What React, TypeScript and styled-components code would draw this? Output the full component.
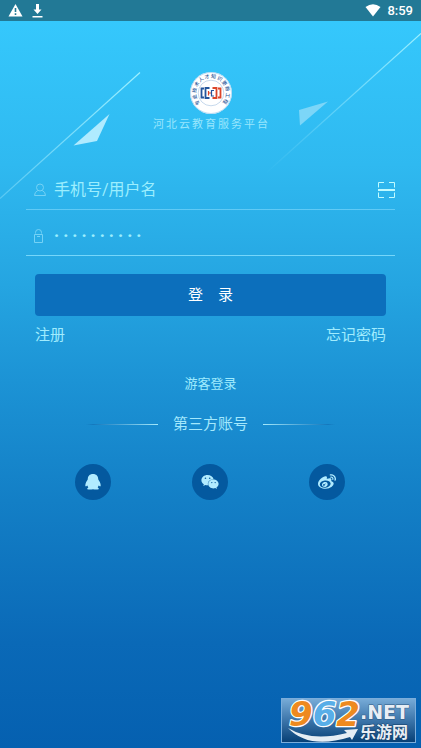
import React from "react";
import styled, { createGlobalStyle } from "styled-components";
import { FaWeibo, FaWeixin } from "react-icons/fa";

const GlobalStyle = createGlobalStyle`
  * { box-sizing: border-box; }
  body {
    margin: 0;
    font-family: Roboto, "Noto Sans CJK SC", sans-serif;
    color: #a4e8fc;
  }
`;

const Page = styled.div`
  position: relative;
  display: flex;
  flex-direction: column;
  min-height: 100vh;
  overflow: hidden;
  background: linear-gradient(180deg, #36cafe 0%, #2fb9f0 22%, #25a5e1 38%, #1c93d5 51%, #137fc6 67%, #0a69b7 86%, #0560b0 100%);
`;

const StatusBar = styled.header`
  display: flex;
  align-items: center;
  justify-content: space-between;
  height: 21px;
  padding: 0 8px;
  background: #227996;
  color: #fff;
  font: 500 13px/21px Roboto, sans-serif;
`;

const StatusGroup = styled.div<{ $gap: number }>`
  display: flex;
  align-items: center;
  gap: ${(p) => p.$gap}px;
  svg { display: block; }
`;

const Backdrop = styled.svg`
  position: absolute;
  top: 21px;
  left: 0;
  width: 100%;
  pointer-events: none;
`;

const Content = styled.main`
  position: relative;
  display: flex;
  flex-direction: column;
  padding: 51px 26px 0;
`;

const Brand = styled.div`
  display: flex;
  flex-direction: column;
  align-items: center;
  gap: 3px;
  svg { display: block; }
`;

const BrandName = styled.h1`
  margin: 0;
  padding-left: 2px;
  font-size: 11px;
  line-height: 16px;
  font-weight: 400;
  letter-spacing: 2px;
  color: #98e6fd;
`;

const Form = styled.form`
  display: flex;
  flex-direction: column;
  margin-top: 37px;
`;

const Field = styled.label<{ $line: string; $height: number; $top: number }>`
  display: flex;
  align-items: center;
  height: ${(p) => p.$height}px;
  padding: ${(p) => p.$top}px 0 0 7px;
  border-bottom: 1px solid ${(p) => p.$line};
`;

const FieldIcon = styled.svg`
  flex: none;
  width: 14px;
  height: 14px;
  margin-right: 7px;
  fill: none;
  stroke: #74d2f6;
  stroke-width: 1;
`;

const Input = styled.input<{ $dots?: boolean }>`
  flex: 1;
  min-width: 0;
  padding: 0;
  border: 0;
  outline: 0;
  background: transparent;
  font: ${(p) => (p.$dots ? 900 : 400)} 16px/24px Roboto, "Noto Sans CJK SC", sans-serif;
  color: #a4f0ff;
  letter-spacing: ${(p) => (p.$dots ? "4px" : "normal")};
  &::placeholder { color: #9ceefe; opacity: 1; }
`;

const PlainButton = styled.button`
  padding: 0;
  border: 0;
  background: transparent;
  color: inherit;
  cursor: pointer;
  svg { display: block; }
`;

const LoginButton = styled(PlainButton)`
  height: 42px;
  margin: 18px 9px 0;
  border-radius: 4px;
  background: #0c6fbc;
  color: #fff;
  font: 400 15px/42px Roboto, "Noto Sans CJK SC", sans-serif;
`;

const Links = styled.nav`
  display: flex;
  justify-content: space-between;
  margin: 8px 9px 0;
`;

const TextLink = styled.a<{ $size: number }>`
  font-size: ${(p) => p.$size}px;
  line-height: 22px;
  color: #a0ecfe;
  text-decoration: none;
`;

const Guest = styled.div`
  display: flex;
  justify-content: center;
  margin-top: 27px;
`;

const Divider = styled.div`
  display: flex;
  align-items: center;
  justify-content: center;
  gap: 15px;
  margin-top: 18px;
`;

const Rule = styled.span<{ $to: string }>`
  width: 72px;
  height: 1px;
  background: linear-gradient(to ${(p) => p.$to}, #0f6fb800, #1378bd 10%, #a4e8fb);
`;

const DividerText = styled.h2`
  margin: 0;
  font-size: 15px;
  line-height: 22px;
  font-weight: 400;
`;

const Socials = styled.div`
  display: flex;
  justify-content: space-between;
  margin: 29px 50px 60px 49px;
`;

const SocialButton = styled(PlainButton)`
  display: grid;
  place-items: center;
  width: 36px;
  height: 36px;
  border-radius: 50%;
  background: #04599f;
  color: #b1ebff;
`;

const Watermark = styled.svg`
  position: absolute;
  right: 5px;
  bottom: 5px;
  width: 135px;
  height: 45px;
  overflow: visible;
`;

function Emblem() {
  return (
    <svg width="42" height="42" viewBox="0 0 42 42" role="img" aria-label="专业技术人才知识更新工程">
      <circle cx="21" cy="21" r="21" fill="#fff" />
      <circle cx="21" cy="21" r="20.5" fill="none" stroke="#8fc4ec" strokeWidth=".6" />
      <circle cx="21" cy="21" r="12.8" fill="none" stroke="#8fb2d8" strokeWidth=".5" />
      <path id="emblem-arc" d="M10.4 31.6A15 15 0 1 1 31.6 31.6" fill="none" />
      <text fill="#1f5598" fontSize="5" fontWeight="500" fontFamily='"Noto Sans CJK SC", sans-serif' letterSpacing=".8">
        <textPath href="#emblem-arc">专业技术人才知识更新工程</textPath>
      </text>
      <g fill="none">
        <path d="M19.500 16H15.500V26H19.500" stroke="#24559b" strokeWidth="1.800" />
        <path d="M14 16.500H11.500V25.500H14" stroke="#24559b" strokeWidth="1.800" />
        <path d="M22.500 16H26.500V26H22.500" stroke="#dc4529" strokeWidth="1.800" />
        <path d="M28 16.500H30.500V25.500H28" stroke="#dc4529" strokeWidth="1.800" />
        <path d="M18.500 19v4.500M18.500 21h3" stroke="#dc4529" strokeWidth="1.200" />
        <path d="M24 18.500H21.500V24H24" stroke="#24559b" strokeWidth="1.200" />
      </g>
    </svg>
  );
}

function BackdropShapes() {
  return (
    <Backdrop viewBox="0 0 421 180" aria-hidden="true">
      <defs>
        <linearGradient id="ray-left" x1="0" y1="1" x2="1" y2="0">
          <stop offset="0" stopColor="#8fe2fc" stopOpacity=".45" />
          <stop offset="1" stopColor="#9df0ff" />
        </linearGradient>
        <linearGradient id="ray-right" x1="0" y1="1" x2="1" y2="0">
          <stop offset="0" stopColor="#8fe2fc" stopOpacity="0" />
          <stop offset="1" stopColor="#9df0ff" />
        </linearGradient>
      </defs>
      <path d="M0 177.500L140 51.500" stroke="url(#ray-left)" strokeWidth="1.200" />
      <path d="M265 153L421 12.500" stroke="url(#ray-right)" strokeWidth="1.200" />
      <path d="M109.500 93L73.500 124.500L97 120Z" fill="#b0ebff" />
      <path d="M328 80.500L299 89L300 104.500Z" fill="#7cd6f8" />
    </Backdrop>
  );
}

function SiteMark() {
  return (
    <Watermark viewBox="0 0 135 45" role="img" aria-label="962.NET 乐游网">
      <defs>
        <linearGradient id="mark-bg" x1="0" y1="0" x2="0" y2="1">
          <stop offset="0" stopColor="#78acd8" />
          <stop offset=".5" stopColor="#3c75aa" />
          <stop offset="1" stopColor="#063f75" />
        </linearGradient>
      </defs>
      <rect x=".5" y=".5" width="134" height="44" fill="url(#mark-bg)" stroke="#7baddb" />
      <path d="M7 30Q30 44 66 35L63 32L77 31L71 42L69 39Q28 52 7 30Z" fill="#e5edf4" />
      <g fontFamily='"DejaVu Sans", sans-serif' fontWeight="700" paintOrder="stroke" strokeLinejoin="round">
        <text x="8" y="28" fontSize="34" fontStyle="italic" stroke="#fff" strokeWidth="2.500">
          <tspan fill="#ee8a20">9</tspan>
          <tspan fill="#58aee8">6</tspan>
          <tspan fill="#ee8a20">2</tspan>
        </text>
        <text x="79" y="21" fontSize="19" fill="#e7eef5" stroke="#31597f" strokeWidth="1">.NET</text>
      </g>
      <text x="79" y="40" fontSize="16" fontWeight="700" fontFamily='"Noto Sans CJK SC", sans-serif' fill="#e7eef5" paintOrder="stroke" stroke="#153f68" strokeWidth="1">
        乐游网
      </text>
    </Watermark>
  );
}

export default function App() {
  return (
    <>
      <GlobalStyle />
      <Page>
        <BackdropShapes />
        <StatusBar>
          <StatusGroup $gap={9}>
            <svg width="15" height="13" viewBox="0 0 15 13" aria-hidden="true">
              <path d="M7.500 0L14.500 12.500H.5Z" fill="#fff" />
              <path d="M7.500 4v4M7.500 9.200v1.800" stroke="#227996" strokeWidth="1.600" />
            </svg>
            <svg width="11" height="14" viewBox="0 0 11 14" aria-hidden="true">
              <path d="M4 0h3v5.500h2.500L5.500 10L1.500 5.500H4ZM.5 12h10v1.500H.5Z" fill="#fff" />
            </svg>
          </StatusGroup>
          <StatusGroup $gap={6}>
            <svg width="16" height="13" viewBox="0 0 16 13" aria-hidden="true">
              <path d="M8 12.500L.5 3Q8-2.500 15.500 3Z" fill="#fff" />
            </svg>
            <span>8:59</span>
          </StatusGroup>
        </StatusBar>
        <Content>
          <Brand>
            <Emblem />
            <BrandName>河北云教育服务平台</BrandName>
          </Brand>
          <Form onSubmit={(e) => e.preventDefault()}>
            <Field $line="#60caf5" $height={40} $top={0}>
              <FieldIcon viewBox="0 0 14 14" aria-hidden="true">
                <circle cx="7" cy="4.500" r="3.500" />
                <path d="M4.800 7.500Q1.500 9 1.500 12.500h11Q12.500 9 9.200 7.500" />
              </FieldIcon>
              <Input type="text" aria-label="手机号/用户名" placeholder="手机号/用户名" />
              <PlainButton type="button" aria-label="扫一扫">
                <svg width="17" height="16" viewBox="0 0 17 16" fill="none" stroke="#c0fbff" strokeWidth="1">
                  <path d="M.5 5.500V.5h5.500M11 .5h5.500v5M.5 10.500v5h5.500M11 15.500h5.500v-5" />
                  <path d="M0 8h17" strokeWidth="2" />
                </svg>
              </PlainButton>
            </Field>
            <Field $line="#75d6fa" $height={46} $top={7}>
              <FieldIcon viewBox="0 0 14 14" aria-hidden="true">
                <path d="M2.500 4.500V3.500Q2.500.5 5.500.5T8.500 3.500V4.500M1.500 5.500h8v8h-8ZM4 7.500h3" />
              </FieldIcon>
              <Input type="password" $dots aria-label="密码" placeholder="··········" />
            </Field>
            <LoginButton type="submit">登　录</LoginButton>
          </Form>
          <Links>
            <TextLink $size={15} href="#register">注册</TextLink>
            <TextLink $size={15} href="#forgot">忘记密码</TextLink>
          </Links>
          <Guest>
            <TextLink $size={13} href="#guest">游客登录</TextLink>
          </Guest>
          <Divider>
            <Rule $to="right" />
            <DividerText>第三方账号</DividerText>
            <Rule $to="left" />
          </Divider>
          <Socials>
            <SocialButton type="button" aria-label="QQ">
              <svg width="16" height="16" viewBox="0 0 16 16" fill="currentColor">
                <path d="M8 0C4.600 0 2.800 2.200 2.800 5.200C1.800 7 .3 9 .3 11.200C.3 12.800 1.300 12.600 2.300 11.600L3.300 13.500Q1.800 14 2.300 15.200Q5 15.800 8 15.200Q11 15.800 13.700 15.200Q14.200 14 12.700 13.500L13.700 11.600C14.700 12.600 15.700 12.800 15.700 11.200C15.700 9 14.200 7 13.200 5.200C13.200 2.200 11.400 0 8 0Z" />
              </svg>
            </SocialButton>
            <SocialButton type="button" aria-label="微信">
              <FaWeixin size={18} />
            </SocialButton>
            <SocialButton type="button" aria-label="微博">
              <FaWeibo size={18} />
            </SocialButton>
          </Socials>
        </Content>
        <SiteMark />
      </Page>
    </>
  );
}
